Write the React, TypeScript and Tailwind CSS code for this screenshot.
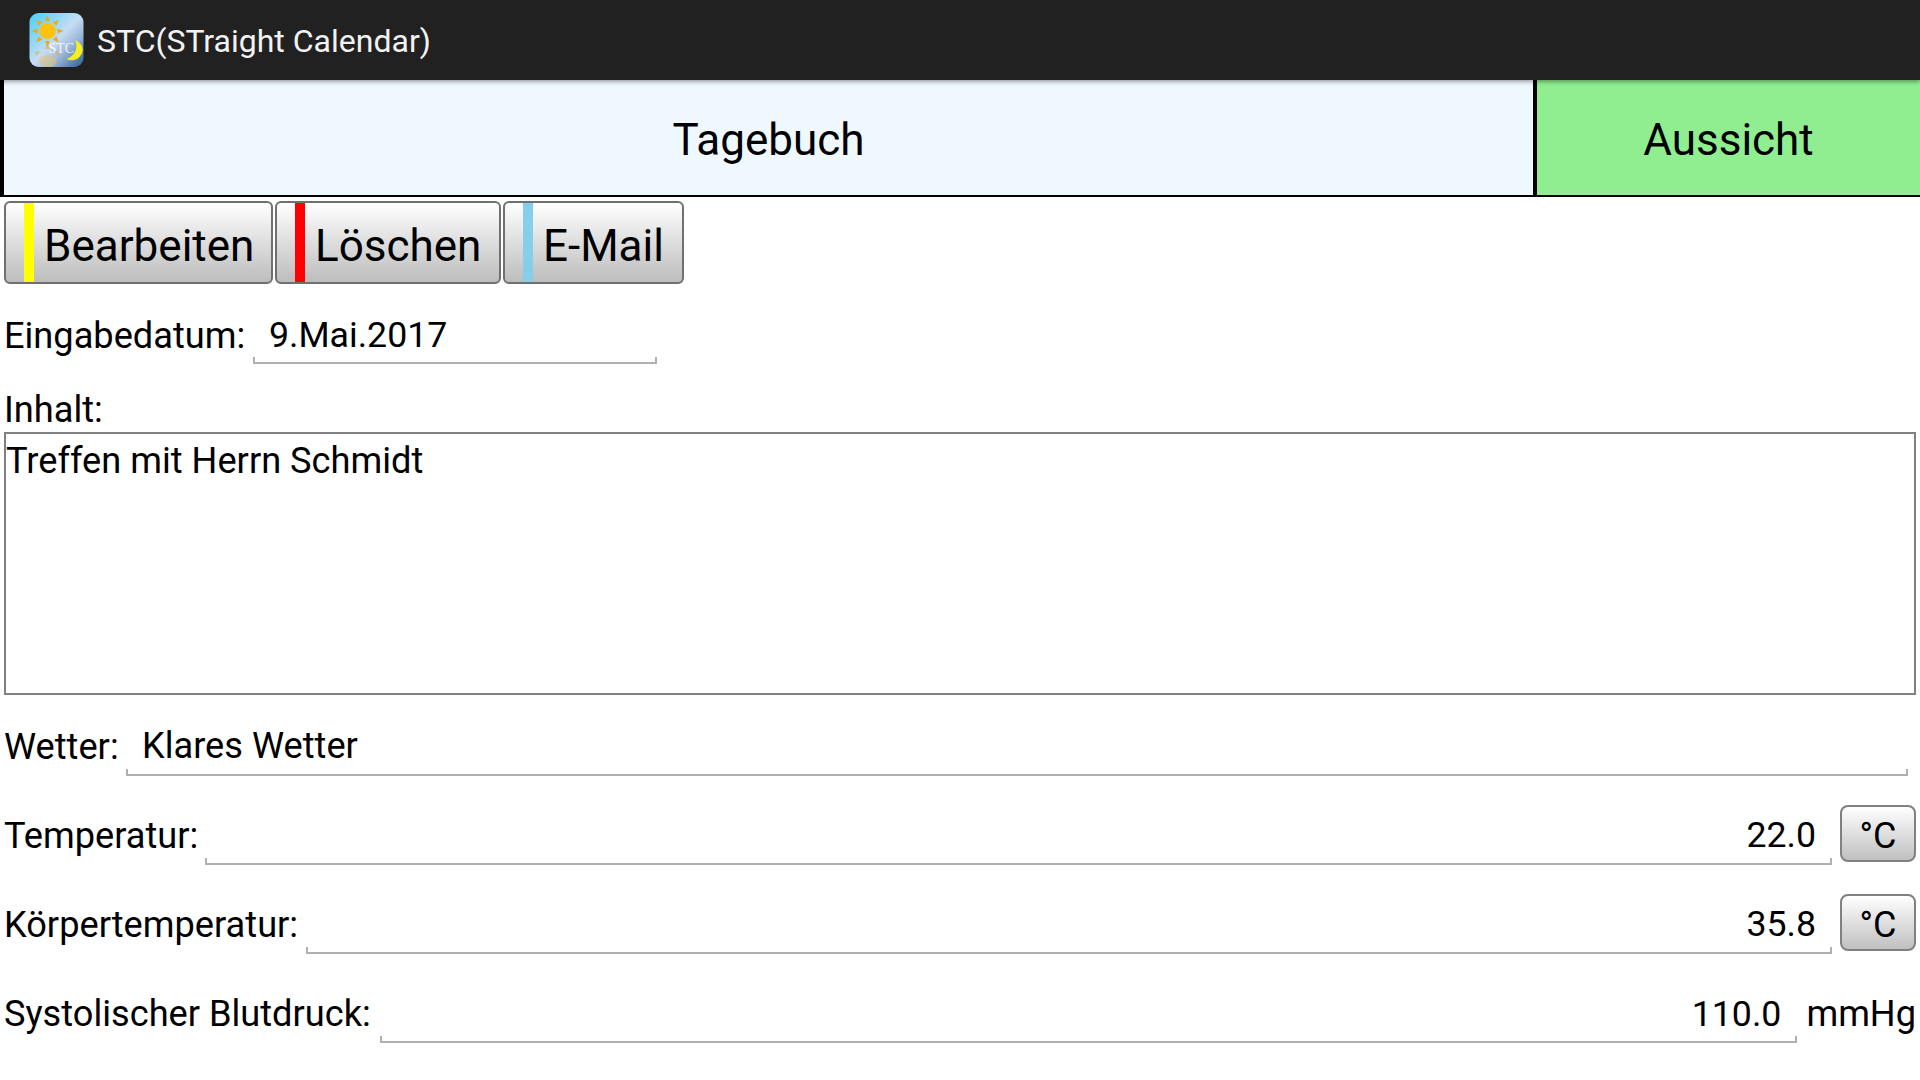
import React from "react";

function Logo() {
  const rays = [0, 45, 90, 135, 180, 225, 270, 315];
  return (
    <svg width="55" height="54" viewBox="0 0 54 54" className="shrink-0">
      <defs>
        <linearGradient id="bg" x1="0" y1="0" x2="1" y2="1">
          <stop offset="0" stopColor="#45d0fd" />
          <stop offset="0.5" stopColor="#c6dcf3" />
          <stop offset="0.68" stopColor="#9db8da" />
          <stop offset="1" stopColor="#2c5a96" />
        </linearGradient>
      </defs>
      <rect x="0" y="0" width="54" height="54" rx="9" fill="url(#bg)" />
      <g transform="translate(18 18)">
        {rays.map((r) => (
          <polygon key={r} points="-2.5,-10 2.5,-10 0,-16" fill="#e5ab22" transform={`rotate(${r})`} />
        ))}
        <circle r="8.3" fill="#ffc20e" />
      </g>
      <g opacity="0.5">
        <polygon points="15,36 21,36 18,30" fill="#e5ab22" />
        <polygon points="7,43 11,38 5,39" fill="#e5ab22" />
        <polygon points="29,43 25,38 31,39" fill="#e5ab22" />
        <ellipse cx="18" cy="48" rx="9" ry="6" fill="#e8c56a" />
      </g>
      <path d="M46 27Q50 41 37 46Q47 50 52 41Q56 33 46 27Z" fill="#f7ef1c" />
      <text x="19" y="40" fontFamily="'Liberation Serif', serif" fontSize="14" fill="#ffffff" fillOpacity="0.85">STC</text>
    </svg>
  );
}

function Field({ className, value, textClass }: { className: string; value: string; textClass: string }) {
  return (
    <div className={`relative h-full ${className}`}>
      <div className={`absolute left-0 right-0 px-4 leading-[48px] text-black ${textClass}`}>{value}</div>
      <div className="absolute left-0 right-0 bottom-0 h-[7px] border-x-2 border-b-2 border-[#b0b0b0]" />
    </div>
  );
}

function ActionButton({ label, strip, width }: { label: string; strip: string; width: string }) {
  return (
    <button className={`flex h-[83px] ${width} items-stretch rounded-[6px] border-2 border-[#707070] bg-gradient-to-b from-[#ffffff] to-[#bdbdbd] pl-[18px]`}>
      <span className={`h-full w-[10px] shrink-0 ${strip}`} />
      <span className="ml-[10px] mt-[7px] self-center text-[44px] leading-none text-black">{label}</span>
    </button>
  );
}

function UnitButton() {
  return (
    <button className="mb-[3px] ml-[8px] flex h-[57px] w-[76px] shrink-0 items-center justify-center rounded-[8px] border-2 border-[#808080] bg-gradient-to-b from-[#ffffff] to-[#c0c0c0] pt-[4px] text-[36px] leading-none text-black">
      °C
    </button>
  );
}

export default function App() {
  return (
    <div className="h-[1080px] w-[1920px] overflow-hidden bg-white font-['Roboto',sans-serif] text-[36.2px] text-black">
      <header className="relative z-10 flex h-[80px] items-center bg-[#212121] pl-[29px] shadow-[0_2px_4px_rgba(0,0,0,0.35)]">
        <Logo />
        <span className="ml-[13px] mt-[1px] text-[32px] leading-none text-[#f2f2f2]">STC(STraight Calendar)</span>
      </header>

      <div className="flex h-[117px] border-b-[2px] border-black">
        <div className="flex w-[1537px] items-center justify-center border-x-[4px] border-black bg-[#f0f8ff] pt-[5px] text-[44px]">Tagebuch</div>
        <div className="flex flex-1 items-center justify-center bg-[#90ee90] pt-[5px] text-[44px]">Aussicht</div>
      </div>

      <div className="flex gap-[2px] pl-[4px] pt-[4px]">
        <ActionButton label="Bearbeiten" strip="bg-[#ffff00]" width="w-[269px]" />
        <ActionButton label="Löschen" strip="bg-[#ff0000]" width="w-[226px]" />
        <ActionButton label="E-Mail" strip="bg-[#87ceeb]" width="w-[181px]" />
      </div>

      <div className="mt-[26px] flex h-[54px] items-end pl-[4px]">
        <span className="mb-[4px] w-[249px] leading-[48px]">Eingabedatum:</span>
        <Field className="w-[404px]" value="9.Mai.2017" textClass="bottom-[5px] text-left text-[35.7px]" />
      </div>

      <div className="mt-[25px] pl-[4px] leading-[42px]">Inhalt:</div>

      <div className="mx-[4px] mt-[1px] h-[263px] border-2 border-[#808080] pt-[2px] leading-[50px]">
        Treffen mit Herrn Schmidt
      </div>

      <div className="mt-[27px] flex h-[54px] items-end pl-[4px] pr-[12px]">
        <span className="mb-[5px] w-[122px] leading-[48px]">Wetter:</span>
        <Field className="flex-1" value="Klares Wetter" textClass="bottom-[6px] text-left text-[36.2px]" />
      </div>

      <div className="mt-[35px] flex h-[54px] items-end pl-[4px] pr-[4px]">
        <span className="mb-[5px] w-[201px] leading-[48px]">Temperatur:</span>
        <Field className="flex-1" value="22.0" textClass="bottom-[6px] text-right text-[35.7px]" />
        <UnitButton />
      </div>

      <div className="mt-[35px] flex h-[54px] items-end pl-[4px] pr-[4px]">
        <span className="mb-[5px] w-[302px] leading-[48px]">Körpertemperatur:</span>
        <Field className="flex-1" value="35.8" textClass="bottom-[6px] text-right text-[35.7px]" />
        <UnitButton />
      </div>

      <div className="mt-[35px] flex h-[54px] items-end pl-[4px] pr-[4px]">
        <span className="mb-[5px] w-[376px] leading-[48px]">Systolischer Blutdruck:</span>
        <Field className="flex-1" value="110.0" textClass="bottom-[5px] text-right text-[35.7px]" />
        <span className="mb-[5px] ml-[9px] leading-[48px]">mmHg</span>
      </div>
    </div>
  );
}
